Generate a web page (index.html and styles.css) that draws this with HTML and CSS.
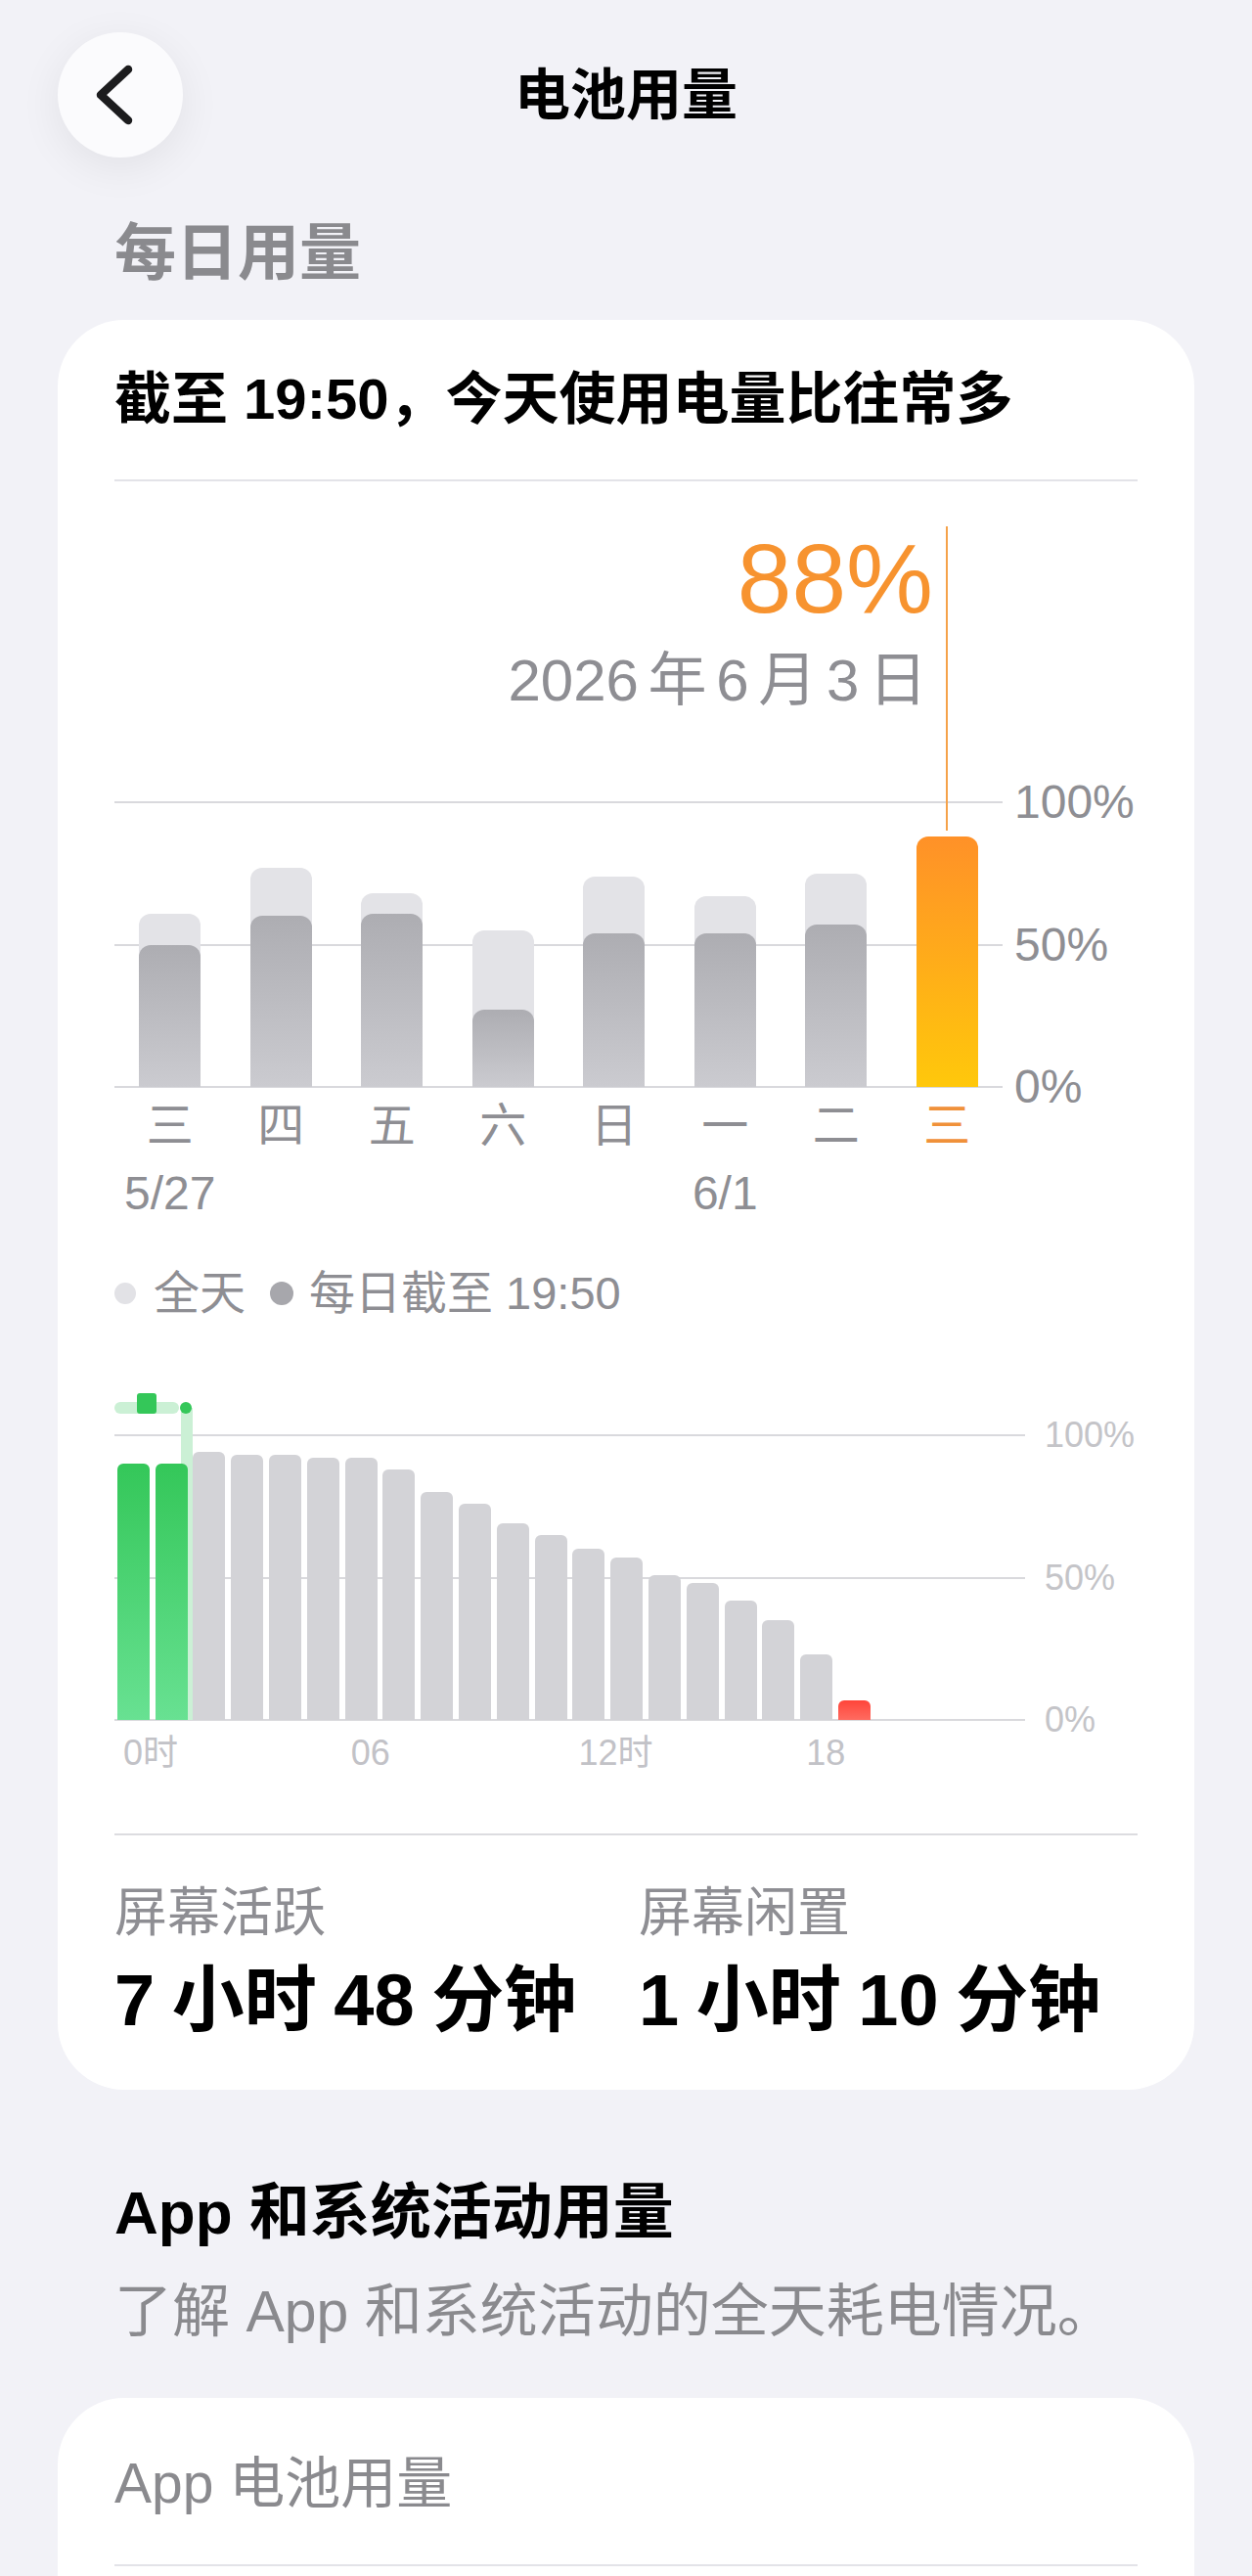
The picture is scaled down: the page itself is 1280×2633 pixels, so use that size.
FILE: index.html
```html
<!DOCTYPE html>
<html lang="zh-CN">
<head>
<meta charset="utf-8">
<title>电池用量</title>
<link rel="stylesheet" href="styles.css">
</head>
<body>
<div class="page">
  <header class="topbar">
    <button class="back" aria-label="返回">
      <svg viewBox="0 0 128 128" width="128" height="128"><path d="M72 38 L44 64 L72 90" fill="none" stroke="#1c1c1e" stroke-width="8.5" stroke-linecap="round" stroke-linejoin="round"/></svg>
    </button>
    <h1 class="title">电池用量</h1>
    <span></span>
  </header>

  <h2 class="sec-title">每日用量</h2>

  <section class="card card-main">
    <div class="card-head">截至 19:50，今天使用电量比往常多</div>
    <div class="divider"></div>

    <div class="callout">
      <div class="callout-pct">88%</div>
      <div class="callout-date">2026 年 6 月 3 日</div>
    </div>

    <div class="plot-row">
      <div class="plot plot-daily">
        <div class="gl gl-top"></div><div class="gl gl-mid"></div><div class="gl gl-bot"></div>
        <div class="cols">
          <div class="col"><div class="stack"><div class="b-light" style="height:61%"></div><div class="b-dark" style="height:50%"></div></div></div>
          <div class="col"><div class="stack"><div class="b-light" style="height:77%"></div><div class="b-dark" style="height:60%"></div></div></div>
          <div class="col"><div class="stack"><div class="b-light" style="height:68%"></div><div class="b-dark" style="height:61%"></div></div></div>
          <div class="col"><div class="stack"><div class="b-light" style="height:55%"></div><div class="b-dark" style="height:27%"></div></div></div>
          <div class="col"><div class="stack"><div class="b-light" style="height:74%"></div><div class="b-dark" style="height:54%"></div></div></div>
          <div class="col"><div class="stack"><div class="b-light" style="height:67%"></div><div class="b-dark" style="height:54%"></div></div></div>
          <div class="col"><div class="stack"><div class="b-light" style="height:75%"></div><div class="b-dark" style="height:57%"></div></div></div>
          <div class="col"><div class="stack"><div class="b-today" style="height:88%"></div></div></div>
        </div>
      </div>
      <div class="yaxis yaxis-daily"><span>100%</span><span>50%</span><span>0%</span></div>
    </div>

    <div class="days">
      <span>三</span><span>四</span><span>五</span><span>六</span><span>日</span><span>一</span><span>二</span><span class="today-label">三</span>
    </div>
    <div class="days dates">
      <span>5/27</span><span></span><span></span><span></span><span></span><span>6/1</span><span></span><span></span>
    </div>

    <div class="legend">
      <span class="dot dot-all"></span><span class="legend-all">全天</span>
      <span class="dot dot-part"></span><span>每日截至 19:50</span>
    </div>

    <div class="plot-row plot-row-hourly">
      <div class="plot plot-hourly">
        <div class="gl gl-top"></div><div class="gl gl-mid"></div><div class="gl gl-bot"></div>
        <div class="charge-line"></div>
        <div class="charge-track"></div>
        <div class="charge-block"></div>
        <div class="charge-dot"></div>
        <div class="hcols">
          <div class="hcol"><div class="hbar g" style="height:90%"></div></div>
          <div class="hcol"><div class="hbar g" style="height:90%"></div></div>
          <div class="hcol"><div class="hbar" style="height:94%"></div></div>
          <div class="hcol"><div class="hbar" style="height:93%"></div></div>
          <div class="hcol"><div class="hbar" style="height:93%"></div></div>
          <div class="hcol"><div class="hbar" style="height:92%"></div></div>
          <div class="hcol"><div class="hbar" style="height:92%"></div></div>
          <div class="hcol"><div class="hbar" style="height:88%"></div></div>
          <div class="hcol"><div class="hbar" style="height:80%"></div></div>
          <div class="hcol"><div class="hbar" style="height:76%"></div></div>
          <div class="hcol"><div class="hbar" style="height:69%"></div></div>
          <div class="hcol"><div class="hbar" style="height:65%"></div></div>
          <div class="hcol"><div class="hbar" style="height:60%"></div></div>
          <div class="hcol"><div class="hbar" style="height:57%"></div></div>
          <div class="hcol"><div class="hbar" style="height:51%"></div></div>
          <div class="hcol"><div class="hbar" style="height:48%"></div></div>
          <div class="hcol"><div class="hbar" style="height:42%"></div></div>
          <div class="hcol"><div class="hbar" style="height:35%"></div></div>
          <div class="hcol"><div class="hbar" style="height:23%"></div></div>
          <div class="hcol"><div class="hbar r" style="height:7%"></div></div>
          <div class="hcol"></div>
          <div class="hcol"></div>
          <div class="hcol"></div>
          <div class="hcol"></div>
        </div>
      </div>
      <div class="yaxis yaxis-hourly"><span>100%</span><span>50%</span><span>0%</span></div>
    </div>

    <div class="hours"><span>0时</span><span>06</span><span>12时</span><span>18</span></div>

    <div class="divider divider-2"></div>

    <div class="stats">
      <div class="stat">
        <div class="stat-label">屏幕活跃</div>
        <div class="stat-value">7 小时 48 分钟</div>
      </div>
      <div class="stat">
        <div class="stat-label">屏幕闲置</div>
        <div class="stat-value">1 小时 10 分钟</div>
      </div>
    </div>
  </section>

  <h2 class="sec-title sec-title-dark">App 和系统活动用量</h2>
  <p class="sec-sub">了解 App 和系统活动的全天耗电情况。</p>

  <section class="card card-apps">
    <div class="apps-head">App 电池用量</div>
    <div class="divider"></div>
  </section>
</div>
</body>
</html>
```
FILE: styles.css
```css
html, body {
  margin: 0;
  padding: 0;
}
body {
  background: #f2f2f7;
  font-family: "Liberation Sans", "Noto Sans CJK SC", sans-serif;
  color: #000;
  overflow: hidden;
}
.page {
  padding: 0 59px;
}

/* header */
.topbar {
  display: grid;
  grid-template-columns: 1fr auto 1fr;
  align-items: center;
  padding-top: 33px;
  height: 128px;
}
.back {
  width: 128px;
  height: 128px;
  border-radius: 50%;
  background: #fbfbfd;
  border: 0;
  padding: 0;
  margin: 0;
  box-shadow: 0 10px 44px rgba(0, 0, 0, 0.07);
  display: block;
}
.back svg { display: block; }
.title {
  margin: 0;
  font-size: 57px;
  line-height: 68px;
  font-weight: 700;
}

/* section titles */
.sec-title {
  margin: 60px 0 0;
  padding-left: 58px;
  font-size: 63px;
  line-height: 74px;
  font-weight: 700;
  color: #8a8a8e;
}
.sec-title-dark {
  color: #000;
  font-size: 62px;
  margin-top: 89px;
  white-space: nowrap;
}
.sec-sub {
  margin: 31px 0 0;
  padding-left: 58px;
  font-size: 59px;
  line-height: 66px;
  color: #8a8a8e;
  white-space: nowrap;
}

/* cards */
.card {
  background: #fff;
  border-radius: 68px;
  padding: 0 58px;
}
.card-main {
  margin-top: 32px;
  padding-top: 47px;
  padding-bottom: 48px;
}
.card-head {
  font-size: 58px;
  line-height: 68px;
  font-weight: 700;
  white-space: nowrap;
}
.divider {
  height: 2px;
  background: #e3e3e8;
  margin-top: 48px;
}

/* callout */
.callout {
  margin-top: 49px;
  padding-right: 209px;
  text-align: right;
}
.callout-pct {
  font-size: 100px;
  line-height: 100px;
  color: #f7932f;
}
.callout-date {
  margin-top: 19px;
  margin-right: 6px;
  font-size: 60px;
  line-height: 72px;
  color: #8e8e93;
  word-spacing: -7px;
  white-space: nowrap;
}

/* plots */
.plot-row {
  display: flex;
  align-items: flex-start;
  margin-top: 88px;
}
.plot {
  position: relative;
  height: 291px;
  flex: none;
}
.plot-daily { width: 908px; }
.plot-hourly { width: 931px; }
.gl {
  position: absolute;
  left: 0;
  right: 0;
  height: 2px;
  background: #d9d9dd;
}
.gl-top { top: -1px; }
.gl-mid { top: 144.5px; }
.gl-bot { bottom: -1px; }

.cols {
  position: relative;
  z-index: 1;
  display: flex;
  height: 100%;
}
.col {
  flex: 1;
  display: flex;
  justify-content: center;
  align-items: flex-end;
}
.stack {
  display: grid;
  grid-template-rows: 100%;
  align-items: end;
  width: 63px;
  height: 100%;
}
.stack > div {
  grid-area: 1 / 1;
  border-radius: 12px 12px 0 0;
}
.b-light { background: #e3e3e7; }
.b-dark { background: linear-gradient(#adadb2, #cbcbd0); }
.b-today {
  position: relative;
  background: linear-gradient(#ff9128, #ffc80b);
}
.b-today::before {
  content: "";
  position: absolute;
  left: calc(50% - 1px);
  bottom: calc(100% + 6px);
  width: 2px;
  height: 311px;
  background: #f5a24a;
}

.yaxis {
  display: flex;
  flex-direction: column;
  justify-content: space-between;
  height: 291px;
}
.yaxis span {
  display: block;
  height: 0;
  line-height: 0;
  white-space: nowrap;
}
.yaxis-daily {
  margin-left: 12px;
  font-size: 48px;
  color: #8e8e93;
}
.yaxis-hourly {
  margin-left: 20px;
  font-size: 36px;
  color: #c4c4c8;
}

.days {
  display: grid;
  grid-template-columns: repeat(8, 1fr);
  width: 908px;
  margin-top: 11px;
  font-size: 48px;
  line-height: 58px;
  color: #8e8e93;
  text-align: center;
}
.days .today-label { color: #f0913a; }
.dates { margin-top: 11px; }

/* legend */
.legend {
  display: flex;
  align-items: center;
  margin-top: 45px;
  font-size: 47px;
  line-height: 56px;
  color: #8e8e93;
  white-space: nowrap;
}
.dot {
  display: block;
  flex: none;
  border-radius: 50%;
}
.dot-all {
  width: 22px;
  height: 22px;
  background: #e2e2e6;
  margin-right: 18px;
}
.legend-all { margin-right: 25px; }
.dot-part {
  width: 24px;
  height: 24px;
  background: #a7a7ac;
  margin-right: 16px;
}

/* hourly */
.plot-row-hourly { margin-top: 117px; }
.hcols {
  position: relative;
  z-index: 1;
  display: flex;
  height: 100%;
}
.hcol {
  flex: 1;
  display: flex;
  justify-content: center;
  align-items: flex-end;
}
.hbar {
  width: 33px;
  border-radius: 6px 6px 0 0;
  background: #d3d3d7;
}
.hbar.g { background: linear-gradient(#34c759, #68e192); }
.hbar.r { background: linear-gradient(#ff453a, #ff6b60); }

.charge-line {
  position: absolute;
  left: 68px;
  top: -28px;
  bottom: 0;
  width: 12px;
  background: #cbf0d5;
}
.charge-track {
  position: absolute;
  left: 0;
  top: -34px;
  width: 66px;
  height: 12px;
  border-radius: 6px;
  background: #cbf0d5;
}
.charge-block {
  position: absolute;
  left: 23px;
  top: -43px;
  width: 20px;
  height: 21px;
  border-radius: 3px;
  background: #34c759;
}
.charge-dot {
  position: absolute;
  left: 67px;
  top: -34px;
  width: 12px;
  height: 12px;
  border-radius: 50%;
  background: #34c759;
}

.hours {
  display: flex;
  width: 931px;
  margin-top: 12px;
  font-size: 36px;
  line-height: 44px;
  color: #c2c2c7;
  white-space: nowrap;
}
.hours span {
  flex: 0 0 25%;
  box-sizing: border-box;
  padding-left: 9px;
}

.divider-2 {
  margin-top: 60px;
  background: #dcdce0;
}

/* stats */
.stats {
  display: grid;
  grid-template-columns: 536px 1fr;
  margin-top: 48px;
}
.stat-label {
  font-size: 54px;
  line-height: 62px;
  color: #8e8e93;
}
.stat-value {
  margin-top: 16px;
  font-size: 74px;
  line-height: 86px;
  font-weight: 700;
  white-space: nowrap;
  word-spacing: -3px;
}

/* apps card */
.card-apps {
  margin-top: 55px;
  padding-top: 54px;
  padding-bottom: 200px;
}
.apps-head {
  font-size: 57px;
  line-height: 66px;
  color: #8a8a8e;
  white-space: nowrap;
}
.card-apps .divider { margin-top: 50px; }
```
